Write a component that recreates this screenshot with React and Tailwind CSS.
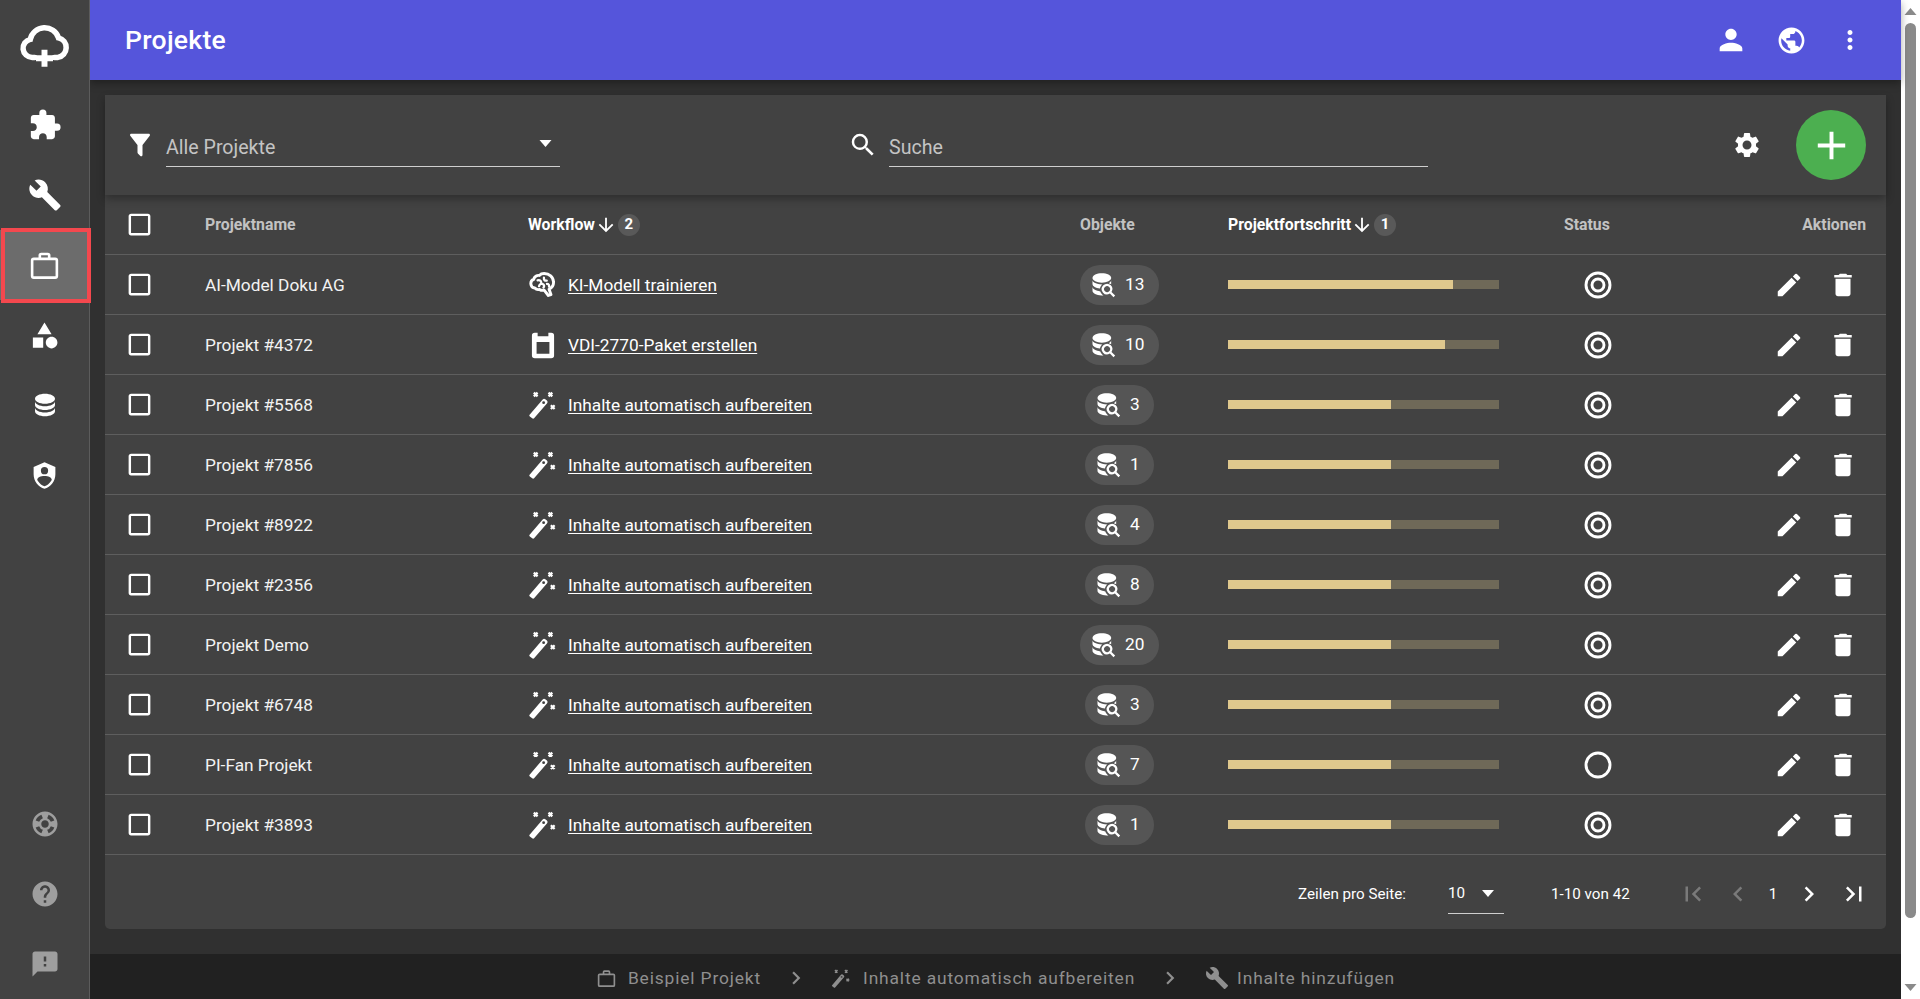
import {
  MdAdd,
  MdArrowDownward,
  MdBuild,
  MdCheckBoxOutlineBlank,
  MdChevronLeft,
  MdChevronRight,
  MdDelete,
  MdEdit,
  MdExtension,
  MdFeedback,
  MdFirstPage,
  MdHelp,
  MdLastPage,
  MdMoreVert,
  MdPerson,
  MdPublic,
  MdSearch,
  MdSettings,
  MdSupport,
} from "react-icons/md";

const rows = [
  { name: "AI-Model Doku AG", wf: "KI-Modell trainieren", icon: "brain", count: 13, progress: 83 },
  { name: "Projekt #4372", wf: "VDI-2770-Paket erstellen", icon: "vdi", count: 10, progress: 80 },
  { name: "Projekt #5568", wf: "Inhalte automatisch aufbereiten", icon: "wand", count: 3, progress: 60 },
  { name: "Projekt #7856", wf: "Inhalte automatisch aufbereiten", icon: "wand", count: 1, progress: 60 },
  { name: "Projekt #8922", wf: "Inhalte automatisch aufbereiten", icon: "wand", count: 4, progress: 60 },
  { name: "Projekt #2356", wf: "Inhalte automatisch aufbereiten", icon: "wand", count: 8, progress: 60 },
  { name: "Projekt Demo", wf: "Inhalte automatisch aufbereiten", icon: "wand", count: 20, progress: 60 },
  { name: "Projekt #6748", wf: "Inhalte automatisch aufbereiten", icon: "wand", count: 3, progress: 60 },
  { name: "PI-Fan Projekt", wf: "Inhalte automatisch aufbereiten", icon: "wand", count: 7, progress: 60, open: true },
  { name: "Projekt #3893", wf: "Inhalte automatisch aufbereiten", icon: "wand", count: 1, progress: 60 },
];

const COLS = "grid grid-cols-[100px_323px_552px_148px_336px_120px_1fr] items-center";

function Mdi({ d, className }) {
  return (
    <svg viewBox="0 0 24 24" fill="currentColor" className={className}>
      <path d={d} />
    </svg>
  );
}

const SHAPE = "M11,13.5V21.5H3V13.5H11M12,2L17.5,11H6.5L12,2M17.5,13C20,13 22,15 22,17.5C22,20 20,22 17.5,22C15,22 13,20 13,17.5C13,15 15,13 17.5,13Z";
const DATABASE = "M12,3C7.58,3 4,4.79 4,7C4,9.21 7.58,11 12,11C16.42,11 20,9.21 20,7C20,4.79 16.42,3 12,3M4,9V12C4,14.21 7.58,16 12,16C16.42,16 20,14.21 20,12V9C20,11.21 16.42,13 12,13C7.58,13 4,11.21 4,9M4,14V17C4,19.21 7.58,21 12,21C16.42,21 20,19.21 20,17V14C20,16.21 16.42,18 12,18C7.58,18 4,16.21 4,14Z";
const SHIELD = "M12,1L3,5V11C3,16.55 6.84,21.74 12,23C17.16,21.74 21,16.55 21,11V5L12,1M12,5A3,3 0 0,1 15,8A3,3 0 0,1 12,11A3,3 0 0,1 9,8A3,3 0 0,1 12,5M17.13,17C15.92,18.85 14.11,20.24 12,20.92C9.89,20.24 8.08,18.85 6.87,17C6.53,16.5 6.24,16 6,15.47C6,13.82 8.71,12.47 12,12.47C15.29,12.47 18,13.79 18,15.47C17.76,16 17.47,16.5 17.13,17Z";
const FUNNEL = "M14,12V19.88C14.04,20.18 13.94,20.5 13.71,20.71C13.32,21.1 12.69,21.1 12.3,20.71L10.29,18.7C10.06,18.47 9.96,18.16 10,17.87V12H9.97L4.21,4.62C3.87,4.19 3.95,3.56 4.38,3.22C4.57,3.08 4.78,3 5,3V3H19V3C19.22,3 19.43,3.08 19.62,3.22C20.05,3.56 20.13,4.19 19.79,4.62L14.03,12H14Z";

function CloudLogo({ className }) {
  return (
    <svg viewBox="0 0 24 24" fill="none" stroke="currentColor" strokeWidth="2.6" strokeLinecap="round" className={className}>
      <path d="M7.4 17.6H6.2a4.3 4.3 0 0 1-.9-8.5A6.9 6.9 0 0 1 18.6 8.4a4.7 4.7 0 0 1-.3 9.2h-1.6" />
      <path d="M12 14v8M8 18h8" strokeLinecap="butt" strokeWidth="2.8" />
    </svg>
  );
}

function CaseIcon({ className }) {
  return (
    <svg viewBox="0 0 24 24" fill="none" stroke="currentColor" strokeWidth="1.9" strokeLinejoin="round" className={className}>
      <rect x="3" y="7.2" width="18" height="13.6" rx="1.2" />
      <path d="M8.6 7.2V4.6q0-1 1-1h4.8q1 0 1 1v2.6" />
    </svg>
  );
}

function BrainIcon({ className }) {
  return (
    <svg viewBox="0 0 24 24" fill="none" stroke="currentColor" strokeWidth="2.5" strokeLinecap="round" strokeLinejoin="round" className={className}>
      <path d="M13 2.2c-1.8 0-3.2.6-4 1.6-2.2-.4-4.6 1-5 3.4-1.6.6-2.6 2.2-2.4 4 .2 1.8 1.6 3.2 3.4 3.4 1 1.2 2.6 1.6 4 1.2 1.2.8 2.6 1 4 .6l3.6 4.6 2.2-.8-1.6-4.6c2.4-1.2 4-3.6 3.8-6.2-.2-4.4-3.6-7.2-8-7.2z" />
      <path d="M7.4 8c1.8-.6 2.8.2 3 1.6M12.8 5.8c-.2 1.8.8 2.8 2.4 2.4M8.6 13c.4-1.8 2-2.4 3.2-1.8 1.4.6 1.4 2.2.6 3M15.4 11c1.4 0 2 1 1.8 2.4" strokeWidth="2" />
    </svg>
  );
}

function WandIcon({ className }) {
  return (
    <svg viewBox="0 0 24 24" fill="none" stroke="currentColor" strokeWidth="1.9" className={className}>
      <path d="M1.4 20.4L12.6 7.2q1-1.1 2.2-.2l1.4 1.2q1 1 .2 2.2L5.2 23.4q-.8.7-1.6 0l-2-1.6q-.8-.7-.2-1.4z" fill="currentColor" stroke="none" />
      <circle cx="13.4" cy="10" r="1.2" fill="#424242" stroke="none" />
      <path d="M5 1.4l3.2 3.2M8.2 1.4L5 4.6M17.6 1.4l3.2 3.2M20.8 1.4l-3.2 3.2M19.6 12.2l3.2 3.2M22.8 12.2l-3.2 3.2" />
    </svg>
  );
}

function VdiIcon({ className }) {
  return (
    <svg viewBox="0 0 24 24" fill="currentColor" className={className}>
      <path fillRule="evenodd" d="M2.5 4Q2.5 1.6 5 1.6h2.4v2.8h9.2V1.6H19q2.5 0 2.5 2.4v17q0 2.4-2.5 2.4H5q-2.5 0-2.5-2.4zM6.5 9.4V19.6H17.5V9.4z" />
    </svg>
  );
}

function TargetIcon({ className }) {
  return (
    <svg viewBox="0 0 24 24" fill="none" stroke="currentColor" strokeWidth="2.3" className={className}>
      <circle cx="12" cy="12" r="9.6" />
      <circle cx="12" cy="12" r="4.8" />
    </svg>
  );
}

function RingIcon({ className }) {
  return (
    <svg viewBox="0 0 24 24" fill="none" stroke="currentColor" strokeWidth="2.3" className={className}>
      <circle cx="12" cy="12" r="9.6" />
    </svg>
  );
}

function DbSearchIcon({ className }) {
  return (
    <svg viewBox="0 0 24 24" fill="currentColor" className={className}>
      <path d="M11 2C6.6 2 3 3.8 3 6s3.6 4 8 4 8-1.8 8-4-3.6-4-8-4z" />
      <path d="M3 8v3.2c0 2 2.8 3.6 6.4 3.9.2-1.3.8-2.5 1.8-3.4.1-.1.2-.2.3-.2H11c-4.4 0-8-1.7-8-3.5zM19 8c0 .9-.8 1.7-2.1 2.4.8.2 1.5.5 2.1 1z" />
      <path d="M3 13.6v3.4c0 2.2 3.4 4 7.7 4 .6 0 1.2 0 1.7-.1-1.2-.8-2.2-2-2.7-3.4-3.5-.3-6.7-1.9-6.7-3.9z" />
      <path fillRule="evenodd" d="M18.7 12.3a4.5 4.5 0 0 0-6.4 0 4.5 4.5 0 0 0 5.6 7L21 22.4l1.4-1.4-3.1-3.1a4.5 4.5 0 0 0-.6-5.6zm-1.4 5a2.5 2.5 0 1 1-3.6-3.6 2.5 2.5 0 0 1 3.6 3.6z" />
    </svg>
  );
}

function RailItem({ children }) {
  return <div className="flex h-[70px] items-center justify-center">{children}</div>;
}

function Rail() {
  return (
    <aside className="relative z-20 flex w-[90px] shrink-0 flex-col border-r border-[#5c5c5c] bg-[#424242] text-white">
      <div className="flex h-[90px] items-center justify-center">
        <CloudLogo className="h-[51px] w-[51px]" />
      </div>
      <RailItem><MdExtension className="h-[34px] w-[34px]" /></RailItem>
      <RailItem><MdBuild className="h-[34px] w-[34px]" /></RailItem>
      <div className="relative flex h-[70px] items-center justify-center bg-[#6c6c6c]">
        <CaseIcon className="h-[33px] w-[33px]" />
        {/* red marker around the active entry */}
        <span className="absolute -bottom-[3px] -right-[2px] -top-[2px] left-[1px] border-4 border-[#f4484e]" />
      </div>
      <RailItem><Mdi d={SHAPE} className="h-[31px] w-[31px]" /></RailItem>
      <RailItem><Mdi d={DATABASE} className="h-[30px] w-[30px]" /></RailItem>
      <RailItem><Mdi d={SHIELD} className="h-[29px] w-[29px]" /></RailItem>
      <div className="mt-auto text-[#9e9e9e]">
        <RailItem><MdSupport className="h-[30px] w-[30px]" /></RailItem>
        <RailItem><MdHelp className="h-[30px] w-[30px]" /></RailItem>
        <RailItem><MdFeedback className="h-[30px] w-[30px]" /></RailItem>
      </div>
    </aside>
  );
}

function SortBadge({ n }) {
  return (
    <span className="ml-[1px] flex h-[22px] w-[22px] items-center justify-center rounded-full bg-[#595959] text-[15px] font-bold text-white">
      {n}
    </span>
  );
}

function Toolbar() {
  return (
    <div className="relative z-10 flex h-[100px] items-center shadow-[0_4px_8px_rgba(0,0,0,0.3)]">
      <Mdi d={FUNNEL} className="ml-[20px] h-[30px] w-[30px] text-white" />
      <div className="ml-[11px] mt-[2px] flex h-[42px] w-[394px] items-center justify-between border-b border-[#cfcfcf] pr-[4px] text-[19.6px] text-[#c4c4c4]">
        <span className="pt-[4px]">Alle Projekte</span>
        <svg viewBox="0 0 12 7" className="mb-[4px] mr-[4px] h-[7px] w-[13px] fill-white">
          <path d="M0 0h12L6 7z" />
        </svg>
      </div>
      <MdSearch className="ml-[288px] h-[30px] w-[30px] text-white" />
      <div className="ml-[11px] mt-[2px] flex h-[42px] w-[539px] items-center border-b border-[#cfcfcf] text-[19.6px] text-[#c4c4c4]">
        <span className="pt-[4px]">Suche</span>
      </div>
      <MdSettings className="ml-[304px] h-[30px] w-[30px] text-white" />
      <button className="ml-[34px] flex h-[70px] w-[70px] items-center justify-center rounded-full bg-[#4caf50] text-white">
        <MdAdd className="h-[47px] w-[47px]" />
      </button>
    </div>
  );
}

function TableHead() {
  return (
    <div className={`${COLS} h-[60px] border-b border-[#5e5e5e] text-[15.8px] font-bold text-[#c2c2c2]`}>
      <div className="pl-[20px]">
        <MdCheckBoxOutlineBlank className="h-[29px] w-[29px] text-white" />
      </div>
      <div>Projektname</div>
      <div className="flex items-center text-white">
        Workflow
        <MdArrowDownward className="h-[22px] w-[22px]" />
        <SortBadge n={2} />
      </div>
      <div>Objekte</div>
      <div className="flex items-center text-white">
        Projektfortschritt
        <MdArrowDownward className="h-[22px] w-[22px]" />
        <SortBadge n={1} />
      </div>
      <div>Status</div>
      <div className="pr-[20px] text-right">Aktionen</div>
    </div>
  );
}

function WorkflowIcon({ type }) {
  if (type === "brain") return <BrainIcon className="ml-[1px] h-[28px] w-[28px]" />;
  if (type === "vdi") return <VdiIcon className="ml-[1px] h-[28px] w-[28px]" />;
  return <WandIcon className="h-[28px] w-[28px]" />;
}

function Row({ row }) {
  return (
    <div className={`${COLS} h-[60px] border-b border-[#5e5e5e] text-[17.3px] text-white`}>
      <div className="pl-[20px]">
        <MdCheckBoxOutlineBlank className="h-[29px] w-[29px]" />
      </div>
      <div className="pt-[2px] text-[#f2f2f2]">{row.name}</div>
      <div className="flex items-center">
        <span className="flex w-[40px] shrink-0 items-center">
          <WorkflowIcon type={row.icon} />
        </span>
        <a className="pt-[3px] underline underline-offset-[2px]">{row.wf}</a>
      </div>
      <div className="w-[79px]">
        <div className={`mx-auto flex h-[40px] items-center rounded-full bg-[#555555] ${row.count > 9 ? "w-[79px]" : "w-[69px]"}`}>
          <DbSearchIcon className="ml-[9px] h-[28px] w-[28px]" />
          <span className="ml-[8px]">{row.count}</span>
        </div>
      </div>
      <div className="relative h-[9px] w-[271px] bg-[#6f6958]">
        <div className="h-full bg-[#dfc88d]" style={{ width: `${row.progress}%` }} />
      </div>
      <div className="pl-[19px]">
        {row.open ? <RingIcon className="h-[30px] w-[30px]" /> : <TargetIcon className="h-[30px] w-[30px]" />}
      </div>
      <div className="flex items-center justify-end gap-[24px] pr-[28px]">
        <MdEdit className="h-[30px] w-[30px]" />
        <MdDelete className="h-[30px] w-[30px]" />
      </div>
    </div>
  );
}

function Pagination() {
  return (
    <div className="flex h-[74px] items-center pt-[4px] text-[15.2px] text-white">
      <span className="ml-[1193px]">Zeilen pro Seite:</span>
      <div className="ml-[42px] flex h-[39px] w-[56px] items-center border-b border-[#cfcfcf]">
        <span>10</span>
        <svg viewBox="0 0 12 7" className="ml-[16px] h-[7px] w-[14px] fill-white">
          <path d="M0 0h12L6 7z" />
        </svg>
      </div>
      <span className="ml-[47px] w-[94px]">1-10 von 42</span>
      <MdFirstPage className="ml-[33px] h-[30px] w-[30px] text-[#7a7a7a]" />
      <MdChevronLeft className="ml-[15px] h-[30px] w-[30px] text-[#7a7a7a]" />
      <span className="ml-[15px] w-[10px] text-center">1</span>
      <MdChevronRight className="ml-[16px] h-[30px] w-[30px]" />
      <MdLastPage className="ml-[15px] h-[30px] w-[30px]" />
    </div>
  );
}

function Crumbs() {
  return (
    <footer className="flex h-[45px] shrink-0 items-center justify-center bg-[#212121] pt-[3px] text-[17.4px] tracking-[0.85px] text-[#8f8f8f]">
      <CaseIcon className="h-[21px] w-[21px]" />
      <span className="ml-[11px]">Beispiel Projekt</span>
      <MdChevronRight className="mx-[22px] h-[26px] w-[26px]" />
      <WandIcon className="h-[19px] w-[19px]" />
      <span className="ml-[13px]">Inhalte automatisch aufbereiten</span>
      <MdChevronRight className="mx-[22px] h-[26px] w-[26px]" />
      <MdBuild className="h-[24px] w-[24px]" />
      <span className="ml-[8px]">Inhalte hinzufügen</span>
    </footer>
  );
}

function FakeScrollbar() {
  return (
    <div className="flex w-[19px] shrink-0 flex-col items-center bg-white py-[8px]">
      <svg viewBox="0 0 12 7" className="h-[7px] w-[13px] fill-[#8a8a8a]">
        <path d="M6 0l6 7H0z" />
      </svg>
      <div className="mt-[8px] h-[895px] w-[11px] rounded-full bg-[#8a8a8a]" />
      <svg viewBox="0 0 12 7" className="mt-auto h-[7px] w-[13px] fill-[#8a8a8a]">
        <path d="M0 0h12L6 7z" />
      </svg>
    </div>
  );
}

export default function App() {
  return (
    <div className="flex h-[999px] w-[1920px] overflow-hidden font-['Roboto',sans-serif]">
      <Rail />
      <div className="flex min-w-0 flex-1 flex-col bg-[#303030]">
        <header className="relative z-10 flex h-[80px] shrink-0 items-center bg-[#5555db] pl-[35px] pr-[36px] text-white shadow-[0_3px_8px_rgba(0,0,0,0.35)]">
          <h1 className="text-[26.5px] font-medium tracking-[0.3px]">Projekte</h1>
          <div className="ml-auto flex items-center gap-[28px]">
            <MdPerson className="h-[34px] w-[34px]" />
            <MdPublic className="h-[31px] w-[31px]" />
            <MdMoreVert className="h-[30px] w-[30px]" />
          </div>
        </header>
        <main className="min-h-0 flex-1 pb-[25px] pl-[15px] pr-[15px] pt-[15px]">
          <div className="h-full rounded-b-[5px] bg-[#424242]">
            <Toolbar />
            <TableHead />
            {rows.map((row) => (
              <Row key={row.name} row={row} />
            ))}
            <Pagination />
          </div>
        </main>
        <Crumbs />
      </div>
      <FakeScrollbar />
    </div>
  );
}
